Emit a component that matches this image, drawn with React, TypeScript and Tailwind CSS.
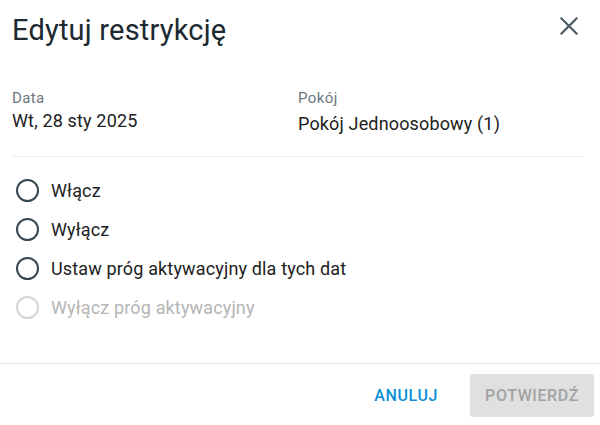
export default function App() {
  const options = [
    { label: 'Włącz', disabled: false },
    { label: 'Wyłącz', disabled: false },
    { label: 'Ustaw próg aktywacyjny dla tych dat', disabled: false },
    { label: 'Wyłącz próg aktywacyjny', disabled: true },
  ];

  return (
    <div className="w-[600px] h-[425px] bg-white flex flex-col font-['Roboto',sans-serif] text-[#212121]">
      <div className="flex justify-between items-start pl-3 pr-[22px] pt-3">
        <h1 className="text-[29px] leading-[36px] tracking-[0.2px] text-[#1c2930]">Edytuj restrykcję</h1>
        <button className="mt-[5px] text-[#4a5a63]">
          <svg width="18" height="18" viewBox="0 0 18 18" fill="none" stroke="currentColor" strokeWidth="2.2" strokeLinecap="square">
            <path d="M1.5 1.5 16.5 16.5M16.5 1.5 1.5 16.5" />
          </svg>
        </button>
      </div>

      <div className="grid grid-cols-[286px_1fr] px-3 mt-10">
        <div>
          <div className="text-[15px] leading-5 tracking-[0.4px] text-[#6b7780]">Data</div>
          <div className="text-[18px] leading-6 tracking-[0.15px] mt-px">Wt, 28 sty 2025</div>
        </div>
        <div>
          <div className="text-[15px] leading-5 tracking-[0.4px] text-[#6b7780]">Pokój</div>
          <div className="text-[18px] leading-6 tracking-[0.15px] mt-[4px]">Pokój Jednoosobowy (1)</div>
        </div>
      </div>

      <div className="ml-3 mr-4 mt-5 h-px bg-[#eceff1]" />

      <div className="mt-[14px] flex flex-col">
        {options.map((o) => (
          <label key={o.label} className="h-[39px] flex items-center pl-4">
            <span
              className={
                o.disabled
                  ? 'w-[23px] h-[23px] rounded-full border-2 border-[#d3d7da]'
                  : 'w-[23px] h-[23px] rounded-full border-2 border-[#37474f]'
              }
            />
            <span
              className={
                o.disabled
                  ? 'ml-3 text-[18px] leading-6 tracking-[0.15px] text-[#b5b5b5]'
                  : 'ml-3 text-[18px] leading-6 tracking-[0.15px]'
              }
            >
              {o.label}
            </span>
          </label>
        ))}
      </div>

      <div className="mt-auto border-t border-[#e6e9eb] flex justify-end items-center gap-4 pt-[10px] pb-2 pr-[6px]">
        <button className="h-[43px] px-4 text-[16px] tracking-[0.6px] font-medium text-[#0b8fd6]">ANULUJ</button>
        <button className="h-[43px] w-[124px] rounded-[3px] bg-[#e0e0e0] text-[16px] tracking-[0.6px] font-medium text-[#a3a3a3]">
          POTWIERDŹ
        </button>
      </div>
    </div>
  );
}
